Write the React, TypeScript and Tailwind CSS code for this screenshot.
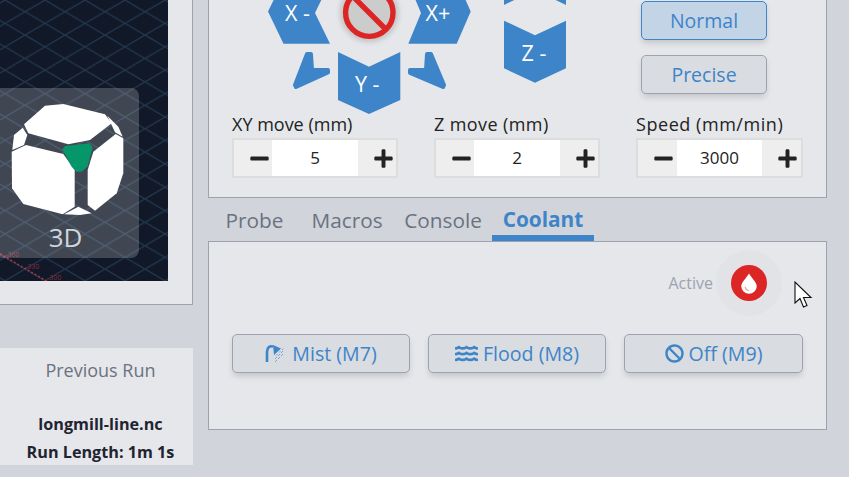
import { FaMinus, FaPlus, FaBan, FaWater } from "react-icons/fa";

const sans = { fontFamily: '"Open Sans", sans-serif' };

function Spinner({ label, value, width, w1, w2, w3, tracking }: { label: string; value: string; width: string; w1: string; w2: string; w3: string; tracking: string }) {
  return (
    <div className={width}>
      <div className={`${tracking} text-[18px] leading-[24px] text-[#222] h-[26px] whitespace-nowrap`}>{label}</div>
      <div className="flex h-[40px] w-full border-2 border-[#ddd] bg-[#eee]">
        <div className={`${w1} flex items-center justify-center text-[#222] pl-[12px]`}><FaMinus size={21} /></div>
        <div className={`${w2} bg-white flex items-center justify-center text-[17px] text-[#222]`}>{value}</div>
        <div className={`${w3} flex items-center justify-center text-[#222] pl-[12px]`}><FaPlus size={21} /></div>
      </div>
    </div>
  );
}

function CoolantButton({ icon, label, width }: { icon: React.ReactNode; label: string; width: string }) {
  return (
    <button className={`${width} h-[39px] rounded-[5px] border border-[#9ca3af] bg-[#d9dce1] shadow-[0_4px_6px_-1px_rgba(0,0,0,0.15)] flex items-center justify-center gap-[5px] text-[19.6px] text-[#3e84c8]`}>
      {icon}
      <span>{label}</span>
    </button>
  );
}

function Jog() {
  const blue = "#3e84c8";
  return (
    <svg width="340" height="120" viewBox="238 0 340 120" className="absolute left-[29px] top-0" style={{ overflow: "visible" }}>
      <defs>
        <filter id="halo" x="-40%" y="-40%" width="180%" height="180%"><feGaussianBlur stdDeviation="2.5" /></filter>
      </defs>
      <polygon fill={blue} points="268,11.5 283.5,-20 330,-18 315,13 330,43.7 283.5,43.7" />
      <polygon fill={blue} points="470.7,11.5 456.7,-20 408,-18 421,13 408.3,43.7 456.7,43.7" />
      <polygon fill={blue} points="338,52 369,66.7 400.3,52 400.3,100 369,114 338,100" />
      <polygon fill={blue} points="504,20.7 535,35.3 566,20.7 566,68.3 535,82.7 504,68.3" />
      <polygon fill={blue} points="504,5 535,-10 566,5 566,-20 504,-20" />
      <polygon fill={blue} stroke={blue} strokeWidth="4" strokeLinejoin="round" points="307,54 311,54 312,70 328,70 328,72.5 296,87 295,85" />
      <polygon fill={blue} stroke={blue} strokeWidth="4" strokeLinejoin="round" points="427,54 431,54 444,85 443,87 410,73 410,70 426,70" />
      <circle cx="369.3" cy="12.7" r="29.5" fill="#c4c4c4" filter="url(#halo)" />
      <circle cx="369.3" cy="12.7" r="23.7" fill="#cccccc" stroke="#dc2626" strokeWidth="5.4" />
      <line x1="352.5" y1="-4" x2="386" y2="29.5" stroke="#dc2626" strokeWidth="5.4" />
      <g fill="#fff" fontSize="21.5" fontFamily="'Open Sans', sans-serif">
        <text x="285" y="21" xmlSpace="preserve">X -</text>
        <text x="425.5" y="21">X+</text>
        <text x="355" y="91.5" xmlSpace="preserve">Y -</text>
        <text x="521.5" y="61" xmlSpace="preserve">Z -</text>
      </g>
    </svg>
  );
}

function Cube() {
  return (
    <svg width="146" height="130" viewBox="-8 92 146 130" className="block">
      <g fill="#fff">
        <polygon points="45,105.7 63.3,104 105,114.3 111.7,123.3 90,140 68.3,144.3 28.3,133.3 24,124.3" />
        <polygon points="22.7,127.7 27.3,135 24,145 12.3,150 14,135" />
        <polygon points="107.3,115.7 118.3,126.7 122.7,136.7 115,132.3" />
        <polygon points="11.7,151.7 26,145 63.3,154 74.7,170 74.7,206.7 62.7,214.3 23.3,204 12,188.3" />
        <polygon points="115.7,134 123.3,138.3 123.3,173.3 116.7,193.3 95,210.7 87.7,205 87.7,170 93.3,151.7" />
        <polygon points="64,214.3 78.3,206.7 91.7,213.3 80,215" />
      </g>
      <polygon fill="#059669" points="62.3,149.3 65,146 89.3,143.3 92.7,147.7 87.3,166.7 81.7,171.7 76.7,171.7 71.7,166.7" />
    </svg>
  );
}

function Canvas() {
  return (
    <div className="relative w-full h-full bg-[#111827] overflow-hidden">
      <svg className="absolute inset-0 w-full h-full">
        <defs>
          <pattern id="grid" width="40" height="23.4" patternUnits="userSpaceOnUse" x="33" y="11.7">
            <path d="M0 0 L40 23.4 M40 0 L0 23.4" stroke="#22364d" strokeWidth="1.4" fill="none" />
          </pattern>
        </defs>
        <rect width="100%" height="100%" fill="url(#grid)" />
        <line x1="8" y1="254" x2="58" y2="283" stroke="#b8323e" strokeWidth="1.5" strokeDasharray="2 2" />
        <g fill="#8a2c38" fontSize="7" fontFamily="'Open Sans', sans-serif">
          <text x="13" y="257">-360</text>
          <text x="33" y="268.5">-330</text>
          <text x="55" y="279.5">-300</text>
        </g>
      </svg>
      <div className="absolute left-0 top-[88px] w-[147px] h-[170px] rounded-r-[8px] bg-white/20">
        <div className="h-[130px] pt-[4px]"><Cube /></div>
        <div className="text-center text-[26px] leading-[34px] text-[#d1d5db] mt-[2px]">3D</div>
      </div>
    </div>
  );
}

export default function App() {
  return (
    <div className="w-[849px] h-[477px] bg-[#d1d5db] overflow-hidden relative" style={sans}>
      <div className="flex items-start">
        <div className="w-[201px] -ml-[8px] shrink-0">
          <div className="h-[305px] border-r border-b border-[#9ca3af] bg-[#e5e7eb] pr-[24px] pb-[23px]">
            <Canvas />
          </div>
          <div className="mt-[43px] h-[117px] bg-[#e5e7eb] text-center pl-[16px]">
            <div className="pt-[10px] text-[18px] leading-[24px] text-[#6b7280]">Previous Run</div>
            <div className="mt-[28px] text-[16.2px] leading-[28px] font-bold text-[#1f2430]">longmill-line.nc</div>
            <div className="text-[16.2px] leading-[28px] font-bold text-[#1f2430] whitespace-nowrap">Run Length: 1m 1s</div>
          </div>
        </div>
        <div className="ml-[15px] w-[619px] shrink-0">
          <div className="relative h-[198px] border-x border-b border-[#9ca3af] bg-[#e5e7eb]">
            <Jog />
            <div className="absolute left-[432px] top-[1px] flex flex-col gap-[15px]">
              <button className="w-[126px] h-[39px] rounded-[5px] border border-[#3e84c8] bg-[#c3d4e7] shadow-[0_4px_6px_-1px_rgba(0,0,0,0.15)] text-[19.5px] text-[#3e84c8]">Normal</button>
              <button className="w-[126px] h-[39px] rounded-[5px] border border-[#9ca3af] bg-[#d9dce1] shadow-[0_4px_6px_-1px_rgba(0,0,0,0.15)] text-[19.5px] text-[#3e84c8]">Precise</button>
            </div>
            <div className="absolute left-[23px] top-[112px] flex gap-[36px]">
              <Spinner tracking="tracking-[0px]" width="w-[166px]" label="XY move (mm)" value="5" w1="w-[38px]" w2="w-[86px]" w3="w-[38px]" />
              <Spinner tracking="tracking-[0.4px]" width="w-[166px]" label="Z move (mm)" value="2" w1="w-[38px]" w2="w-[86px]" w3="w-[38px]" />
              <Spinner tracking="tracking-[0.55px]" width="w-[167px]" label="Speed (mm/min)" value="3000" w1="w-[39px]" w2="w-[85px]" w3="w-[39px]" />
            </div>
          </div>
          <div className="flex h-[43px] text-[20.8px] text-[#6b7280] items-end">
            <div className="ml-[6px] w-[81px] h-full flex items-center justify-center pt-[2px]">Probe</div>
            <div className="ml-[5px] w-[94px] h-full flex items-center justify-center pt-[2px]">Macros</div>
            <div className="w-[98px] h-full flex items-center justify-center pt-[2px]">Console</div>
            <div className="w-[102px] h-full flex items-center justify-center pt-[6px] font-bold text-[#3e84c8] border-b-[6px] border-[#3e84c8]">Coolant</div>
          </div>
          <div className="h-[189px] border border-[#9ca3af] bg-[#e5e7eb] px-[23px]">
            <div className="h-[80px] mb-[12px] flex items-center justify-end pr-[36px] pt-[2px] gap-[18px]">
              <span className="text-[16px] text-[#9ca3af]">Active</span>
              <div className="w-[36px] h-[36px] rounded-full bg-[#dc2626] shadow-[0_0_0_15px_#e2e3e7] flex items-center justify-center">
                <svg width="18" height="21" viewBox="0 0 16 19">
                  <path d="M8 0.5 C9.5 3.5 15 8.5 15 12 A7 6.8 0 0 1 1 12 C1 8.5 6.5 3.5 8 0.5 Z" fill="#fff" />
                  <path d="M4.5 12.5 Q5 15.5 8 16" stroke="#f3a0a0" strokeWidth="1" fill="none" />
                </svg>
              </div>
            </div>
            <div className="flex gap-[18px]">
              <CoolantButton
                width="w-[178px]"
                label="Mist (M7)"
                icon={
                  <svg width="22" height="20" viewBox="0 0 22 20">
                    <path d="M2 18 V8 C2 3 5 1.8 8 2.5" stroke="#3e84c8" strokeWidth="2.6" fill="none" />
                    <polygon points="8,1 16,4.5 9,11" fill="#3e84c8" />
                    <path d="M11 11.5 l1.5 -1.5 M14 8.5 l1.5 -1.5 M17 6 l1.5 -1.5 M10 15 l2 -2 M13 12 l2 -2 M16 9 l2 -2 M10 18 l2 -2 M13 15 l2 -2 M16 12 l2 -2" stroke="#7aa7d6" strokeWidth="1" />
                  </svg>
                }
              />
              <CoolantButton width="w-[178px]" label="Flood (M8)" icon={<FaWater size={23} />} />
              <CoolantButton width="w-[179px]" label="Off (M9)" icon={<FaBan size={19} />} />
            </div>
          </div>
        </div>
      </div>
      <svg width="20" height="28" viewBox="0 0 20 28" className="absolute left-[794px] top-[281px]">
        <path d="M1 1 V22 L6 17.5 L9.5 26 L13 24.5 L9.5 16.5 L17 16.5 Z" fill="#fff" stroke="#111" strokeWidth="1.1" />
      </svg>
    </div>
  );
}
